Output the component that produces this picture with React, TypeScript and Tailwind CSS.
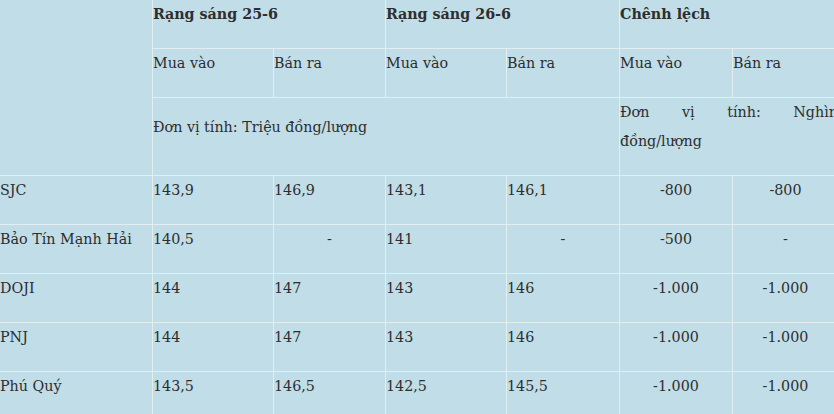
import React from 'react';

const rows = [
  { name: 'SJC', v: ['143,9', '146,9', '143,1', '146,1', '-800', '-800'] },
  { name: 'Bảo Tín Mạnh Hải', v: ['140,5', '-', '141', '-', '-500', '-'] },
  { name: 'DOJI', v: ['144', '147', '143', '146', '-1.000', '-1.000'] },
  { name: 'PNJ', v: ['144', '147', '143', '146', '-1.000', '-1.000'] },
  { name: 'Phú Quý', v: ['143,5', '146,5', '142,5', '145,5', '-1.000', '-1.000'] },
];

const cell = 'bg-[#c1dde8] pb-[19px] leading-[29px]';

const App: React.FC = () => {
  return (
    <div className="w-[834px] h-[414px] overflow-hidden bg-[#c1dde8]">
      <div
        className="w-[838px] bg-[#e3eef2] text-[14.3px] text-[#2e2e2e]"
        style={{ fontFamily: '"DejaVu Serif", serif' }}
      >
        <div className="grid grid-cols-[152px_120px_111px_120px_112px_112px_105px] grid-rows-[48px_48px_77px_repeat(5,48px)] gap-px">
          {/* header */}
          <div className={`${cell} row-span-3`}></div>
          <div className={`${cell} col-span-2 font-bold`}>Rạng sáng 25-6</div>
          <div className={`${cell} col-span-2 font-bold`}>Rạng sáng 26-6</div>
          <div className={`${cell} col-span-2 font-bold`}>Chênh lệch</div>

          <div className={cell}>Mua vào</div>
          <div className={cell}>Bán ra</div>
          <div className={cell}>Mua vào</div>
          <div className={cell}>Bán ra</div>
          <div className={cell}>Mua vào</div>
          <div className={cell}>Bán ra</div>

          <div className={`${cell} col-span-4 flex items-center`}>
            <span>Đơn vị tính: Triệu đồng/lượng</span>
          </div>
          <div className={`${cell} col-span-2`}>
            <div className="flex justify-between">
              <span>Đơn</span>
              <span>vị</span>
              <span>tính:</span>
              <span>Nghìn</span>
            </div>
            <div>đồng/lượng</div>
          </div>

          {/* body */}
          {rows.map((r) => (
            <React.Fragment key={r.name}>
              <div className={cell}>{r.name}</div>
              {r.v.map((x, i) => (
                <div
                  key={i}
                  className={`${cell} ${i >= 4 || x === '-' ? 'text-center' : ''}`}
                >
                  {x}
                </div>
              ))}
            </React.Fragment>
          ))}
        </div>
      </div>
    </div>
  );
};

export default App;
